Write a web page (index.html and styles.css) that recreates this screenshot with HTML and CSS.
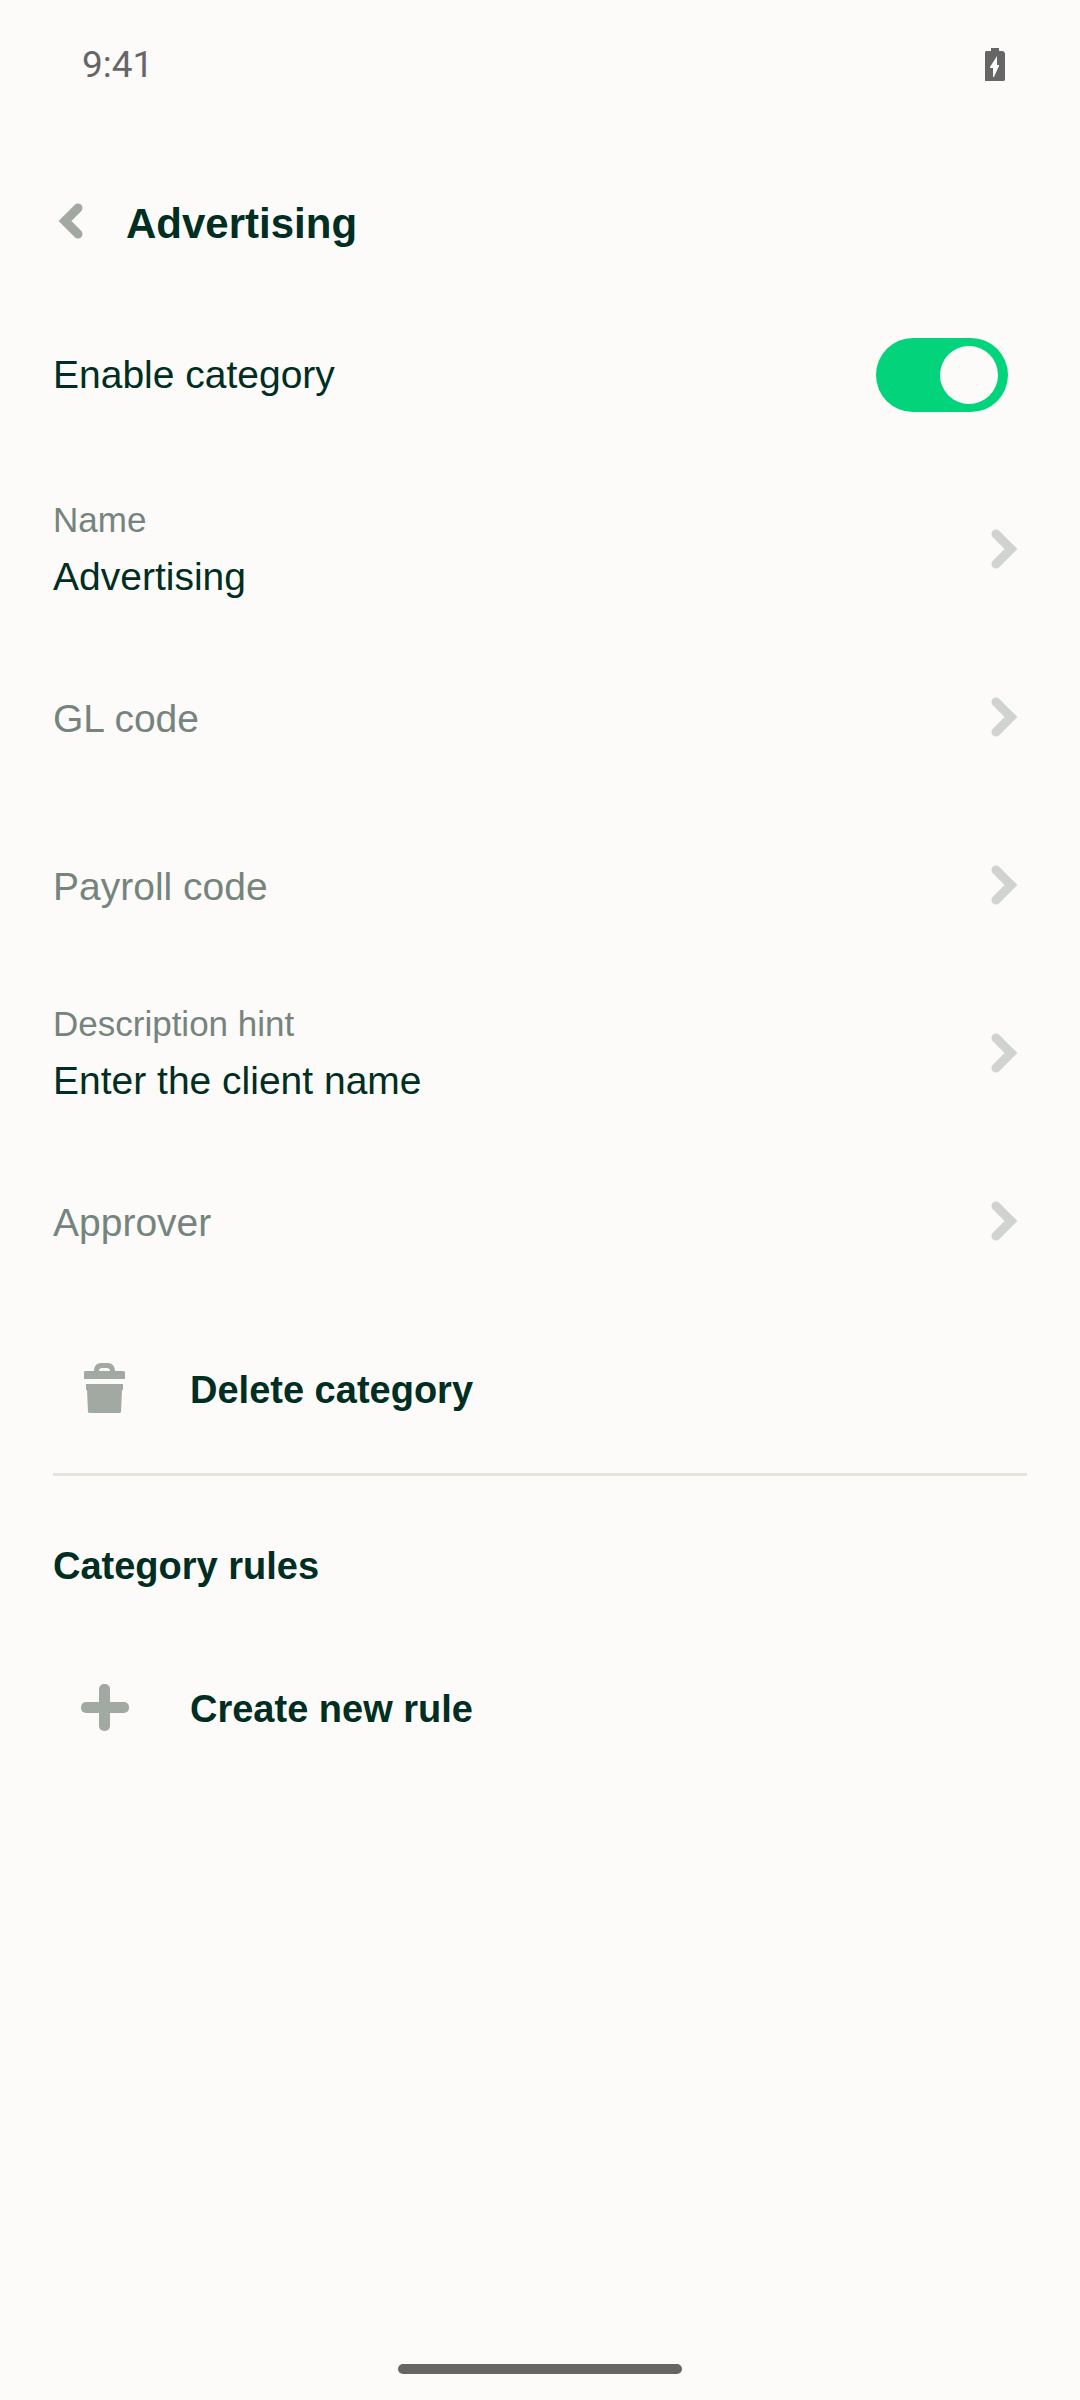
FILE: index.html
```
<!DOCTYPE html>
<html lang="en">
<head>
<meta charset="UTF-8">
<meta name="viewport" content="width=device-width, initial-scale=1.0">
<title>Advertising</title>
<link rel="stylesheet" href="styles.css">
</head>
<body>

    <div class="status-bar">
        <span>9:41</span>
        <svg class="battery" viewBox="0 0 20 33" aria-hidden="true">
            <path fill-rule="evenodd" d="M6 0h8v3h4l2 2v27l-1 1H0V4l1-1h5zM12 8L5 19v1h3v9h1l5-11v-1h-2z"/>
        </svg>
    </div>

    <header class="header">
        <button class="back-button" aria-label="Back">
            <svg class="back-icon" viewBox="0 0 36 48"><path d="M25 10L12 23l13 13"/></svg>
        </button>
        <h1>Advertising</h1>
    </header>

    <main>
        <div class="toggle-row">
            <label for="enable-category">Enable category</label>
            <input type="checkbox" role="switch" id="enable-category" class="toggle" checked>
        </div>

        <button class="row">
            <span class="row-text">
                <span class="row-label">Name</span>
                <span class="row-value">Advertising</span>
            </span>
            <svg class="chevron" viewBox="0 0 46 46"><path d="M15 8l15 15-15 15"/></svg>
        </button>
        <button class="row">
            <span class="row-empty">GL code</span>
            <svg class="chevron" viewBox="0 0 46 46"><path d="M15 8l15 15-15 15"/></svg>
        </button>
        <button class="row">
            <span class="row-empty">Payroll code</span>
            <svg class="chevron" viewBox="0 0 46 46"><path d="M15 8l15 15-15 15"/></svg>
        </button>
        <button class="row">
            <span class="row-text">
                <span class="row-label">Description hint</span>
                <span class="row-value">Enter the client name</span>
            </span>
            <svg class="chevron" viewBox="0 0 46 46"><path d="M15 8l15 15-15 15"/></svg>
        </button>
        <button class="row">
            <span class="row-empty">Approver</span>
            <svg class="chevron" viewBox="0 0 46 46"><path d="M15 8l15 15-15 15"/></svg>
        </button>

        <button class="row action">
            <svg class="action-icon" viewBox="0 0 64 64">
                <path fill-rule="evenodd" d="M13 14h9c0-5 3-8 7-8h7c4 0 7 3 7 8h9l1 1v7H12v-7zM27 14h11c0-2-1-3-3-3h-5c-2 0-3 1-3 3z"/>
                <path d="M14 27h37v6h-1l-1 22-1 1H17l-1-1-1-22h-1z"/>
            </svg>
            <span>Delete category</span>
        </button>

        <hr class="divider">

        <h2>Category rules</h2>
        <button class="row action">
            <svg class="action-icon" viewBox="0 0 64 64">
                <rect x="9" y="26" width="48" height="11" rx="5"/>
                <rect x="27" y="8" width="11" height="47" rx="5"/>
            </svg>
            <span>Create new rule</span>
        </button>
    </main>

    <div class="home-bar"></div>

</body>
</html>
```
FILE: styles.css
```
* {
    box-sizing: border-box;
}
body {
    margin: 0;
    min-height: 100vh;
    display: flex;
    flex-direction: column;
    background-color: #fcfbf9;
    color: #002e22;
    font-family: "Liberation Sans", Arial, sans-serif;
    font-size: 39px;
}
button {
    padding: 0;
    border: none;
    background: none;
    color: inherit;
    font: inherit;
    text-align: left;
    cursor: pointer;
}

/* status bar */
.status-bar {
    display: flex;
    align-items: center;
    justify-content: space-between;
    height: 128px;
    padding: 0 75px 0 82px;
    color: #666666;
    font-family: Roboto, sans-serif;
    font-size: 37px;
}
.battery {
    width: 20px;
    height: 33px;
    fill: #666666;
}

/* header */
.header {
    display: flex;
    align-items: center;
    gap: 37px;
    height: 188px;
    padding: 0 53px;
}
.header h1 {
    margin: 0;
    padding-top: 3px;
    font-size: 42px;
}
.back-icon {
    display: block;
    width: 36px;
    height: 48px;
    fill: none;
    stroke: #a2a9a3;
    stroke-width: 9;
    stroke-linecap: round;
}

main {
    padding: 0 53px;
}
.toggle-row {
    display: flex;
    align-items: center;
    justify-content: space-between;
    height: 118px;
    margin-bottom: 31px;
    padding-right: 19px;
}
.toggle {
    appearance: none;
    display: flex;
    align-items: center;
    width: 132px;
    height: 74px;
    margin: 0;
    padding: 0 10px;
    border-radius: 37px;
    background-color: #a2a9a3;
    cursor: pointer;
}
.toggle::before {
    content: "";
    width: 58px;
    height: 58px;
    border-radius: 50%;
    background-color: #fcfbf9;
}
.toggle:checked {
    justify-content: flex-end;
    background-color: #03d47c;
}

/* menu rows */
.row {
    display: flex;
    align-items: center;
    justify-content: space-between;
    width: 100%;
    height: 168px;
}
.row > span {
    padding-top: 3px;
}
.row-text {
    display: flex;
    flex-direction: column;
}
.row-label {
    color: #76847e;
    font-size: 35px;
    line-height: 52px;
}
.row-value {
    line-height: 62px;
}
.row-empty {
    color: #76847e;
}
.chevron {
    width: 46px;
    height: 46px;
    fill: none;
    stroke: #d0d3cf;
    stroke-width: 9;
    stroke-linecap: round;
}
.action {
    justify-content: flex-start;
    gap: 54px;
    padding-left: 19px;
    font-size: 38px;
    font-weight: bold;
}
.action-icon {
    width: 64px;
    height: 64px;
    fill: #a2a9a3;
}
.divider {
    width: 100%;
    height: 3px;
    margin: 0;
    border: none;
    background-color: #e6e1da;
}
h2 {
    margin: 60px 0 28px;
    font-size: 38px;
    line-height: 60px;
}

.home-bar {
    width: 284px;
    height: 10px;
    margin: auto auto 26px;
    border-radius: 5px;
    background-color: #666666;
}
```
